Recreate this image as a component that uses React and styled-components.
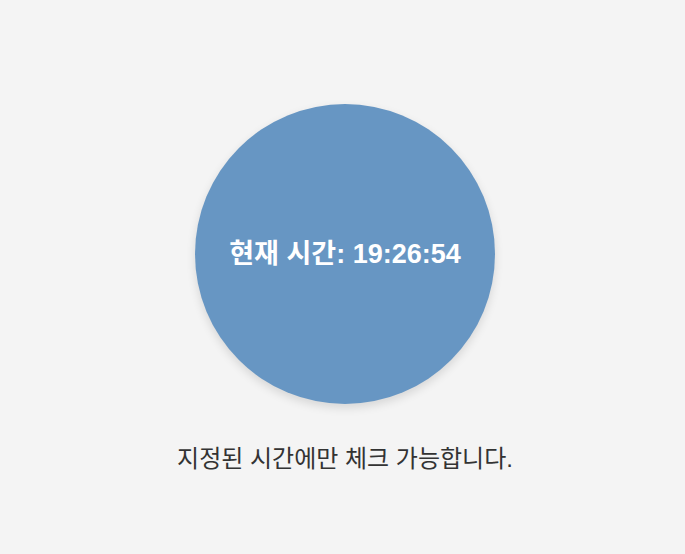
import React, { useState } from "react";
import styled, { createGlobalStyle } from "styled-components";

const GlobalStyle = createGlobalStyle`
  html, body {
    margin: 0;
    padding: 0;
    background: #f4f4f4;
    font-family: "Liberation Sans", Arial, "Noto Sans CJK KR", sans-serif;
  }
`;

const Page = styled.div`
  display: flex;
  flex-direction: column;
  align-items: center;
  padding: 104px 0 0 5px;
  min-height: 554px;
  box-sizing: border-box;
`;

const ClockCircle = styled.div`
  width: 300px;
  height: 300px;
  border-radius: 50%;
  background: #6796c3;
  box-shadow: 0 4px 10px rgba(0, 0, 0, 0.12);
  display: flex;
  align-items: center;
  justify-content: center;
  color: #ffffff;
`;

const TimeText = styled.div`
  font-size: 27px;
  line-height: 32px;
  font-weight: bold;
`;

const Notice = styled.p`
  margin: 41px 0 0;
  font-size: 24px;
  line-height: 28px;
  color: #333333;
`;

export default function App() {
  const [time] = useState("19:26:54");

  return (
    <>
      <GlobalStyle />
      <Page>
        <ClockCircle>
          <TimeText>현재 시간: {time}</TimeText>
        </ClockCircle>
        <Notice>지정된 시간에만 체크 가능합니다.</Notice>
      </Page>
    </>
  );
}
